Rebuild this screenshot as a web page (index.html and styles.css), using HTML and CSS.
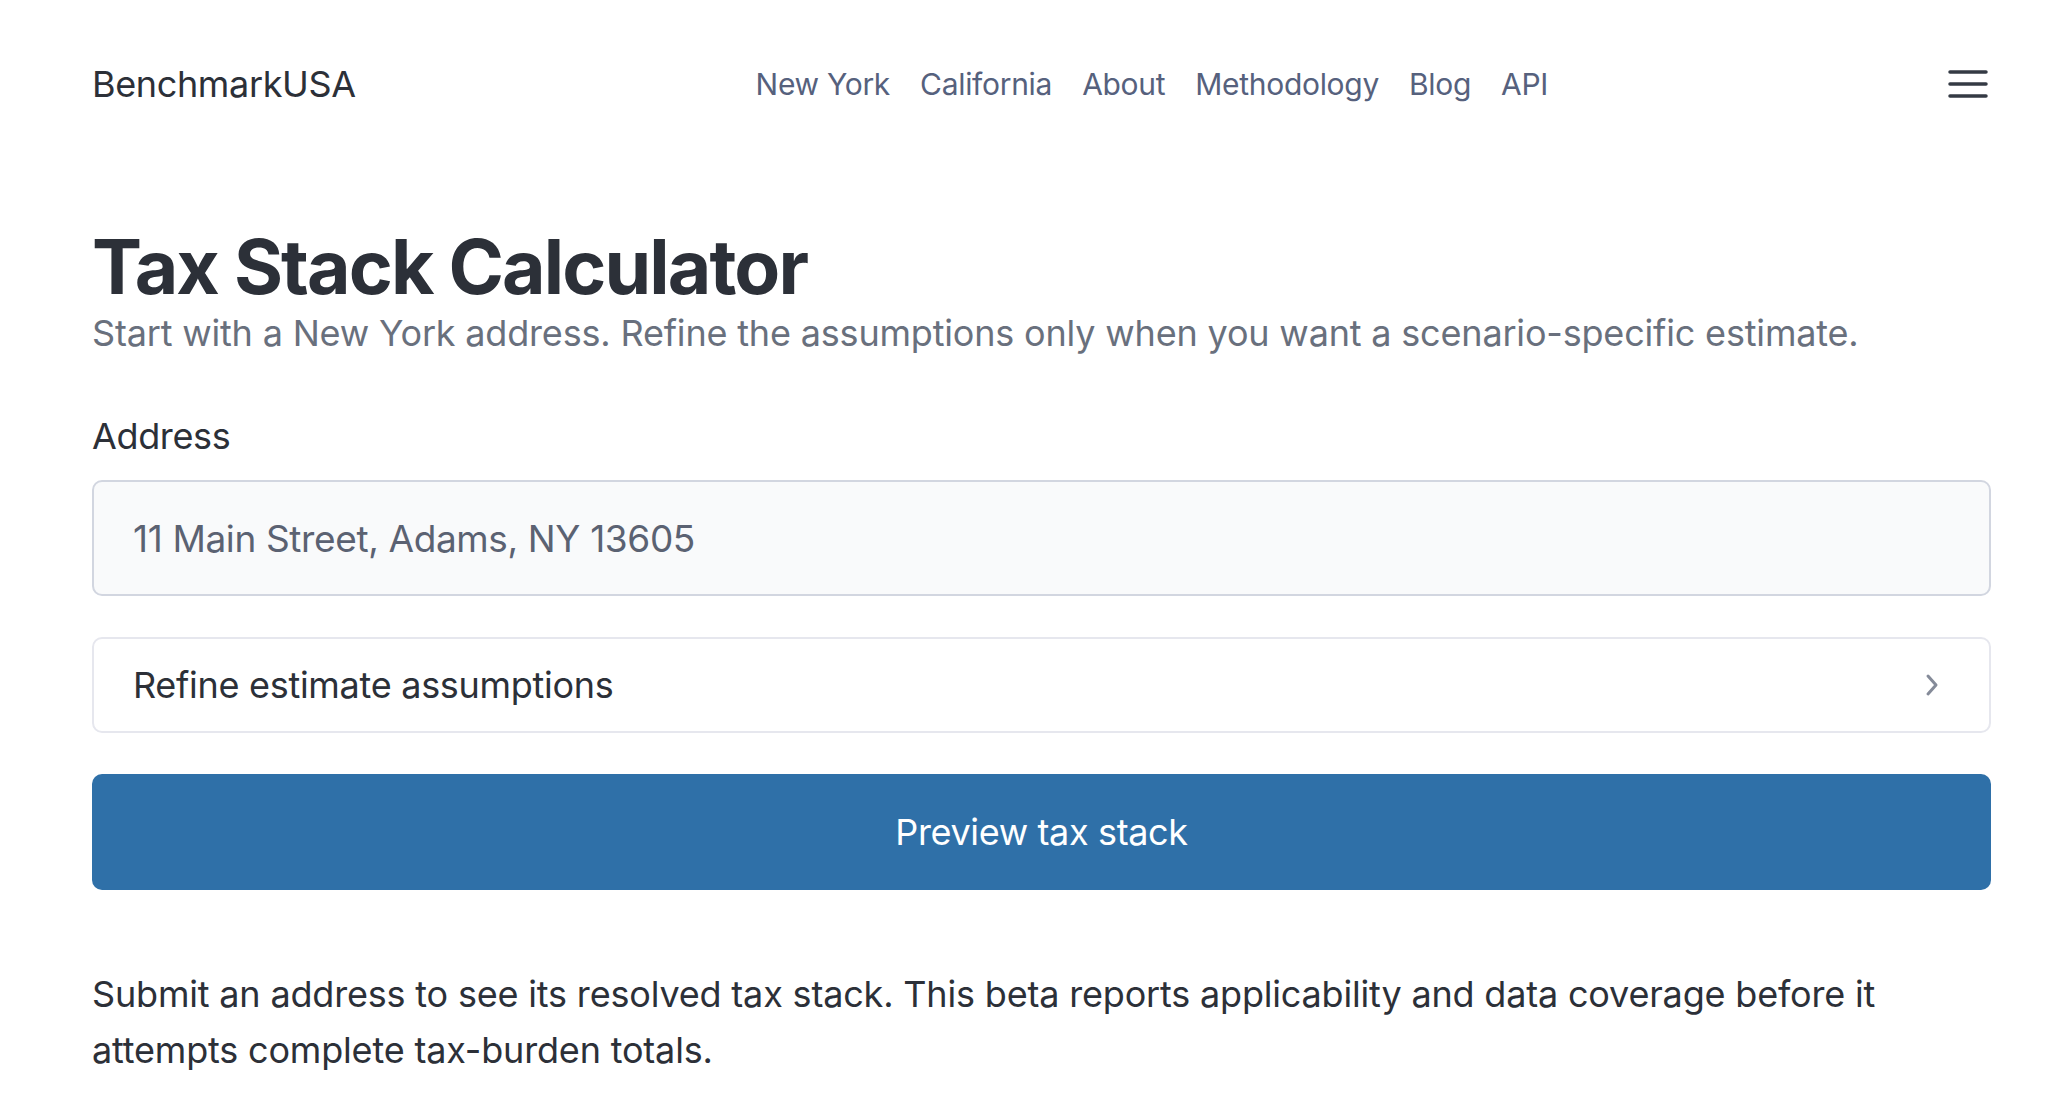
FILE: index.html
```html
<!DOCTYPE html>
<html lang="en">
<head>
<meta charset="utf-8">
<title>Tax Stack Calculator · BenchmarkUSA</title>
<link rel="stylesheet" href="styles.css">
</head>
<body>
<header class="site-header">
  <a class="brand" href="#">BenchmarkUSA</a>
  <nav class="main-nav">
    <a href="#">New York</a>
    <a href="#">California</a>
    <a href="#">About</a>
    <a href="#">Methodology</a>
    <a href="#">Blog</a>
    <a href="#">API</a>
  </nav>
  <button class="menu-toggle" type="button" aria-label="Open menu">
    <svg width="40" height="28" viewBox="0 0 40 28" aria-hidden="true">
      <g stroke="#343a44" stroke-width="3.5" stroke-linecap="round">
        <line x1="2" y1="2" x2="38" y2="2"/>
        <line x1="2" y1="14" x2="38" y2="14"/>
        <line x1="2" y1="26" x2="38" y2="26"/>
      </g>
    </svg>
  </button>
</header>

<main class="page">
  <section class="intro">
    <h1 class="title">Tax Stack Calculator</h1>
    <p class="lead">Start with a New York address. Refine the assumptions only when you want a scenario-specific estimate.</p>
  </section>

  <form class="calc-form">
    <label class="field-label" for="address">Address</label>
    <input class="field-input" id="address" type="text" value="11 Main Street, Adams, NY 13605">

    <details class="refine">
      <summary class="refine-summary">
        <span>Refine estimate assumptions</span>
        <svg class="chevron" width="14" height="24" viewBox="0 0 14 24" aria-hidden="true">
          <path d="M3 3 L11 12 L3 21" fill="none" stroke="#858b99" stroke-width="3" stroke-linecap="round" stroke-linejoin="round"/>
        </svg>
      </summary>
    </details>

    <button class="submit" type="button">Preview tax stack</button>
  </form>

  <p class="note">Submit an address to see its resolved tax stack. This beta reports applicability and data coverage before it attempts complete tax-burden totals.</p>
</main>
</body>
</html>
```

FILE: styles.css
```css
* {
  box-sizing: border-box;
}

html, body {
  margin: 0;
  padding: 0;
  background: #ffffff;
}

body {
  font-family: Inter, "Noto Sans", "Liberation Sans", sans-serif;
  color: #2c3038;
}

a {
  text-decoration: none;
}

/* Top bar */
.site-header {
  display: flex;
  align-items: flex-start;
  justify-content: space-between;
  padding: 60px 73px 0 92px;
  height: 168px;
}

.brand {
  font-size: 36px;
  line-height: 48px;
  color: #2c3038;
  letter-spacing: -0.01em;
}

.main-nav {
  display: flex;
  gap: 30px;
}

.main-nav a {
  font-size: 30px;
  line-height: 48px;
  color: #56617d;
  letter-spacing: -0.01em;
}

.menu-toggle {
  border: 0;
  background: none;
  padding: 0;
  margin: 10px 3px 0 0;
  width: 40px;
  height: 28px;
  display: flex;
  cursor: pointer;
}

/* Content */
.page {
  padding: 0 73px 0 92px;
}

.title {
  margin: 57px 0 0;
  font-size: 75px;
  line-height: 84px;
  font-weight: 700;
  letter-spacing: -0.025em;
  color: #2c3038;
}

.lead {
  margin: 0;
  font-size: 36px;
  line-height: 48px;
  color: #69707d;
  letter-spacing: -0.005em;
}

.calc-form {
  margin-top: 55px;
  display: flex;
  flex-direction: column;
}

.field-label {
  font-size: 36px;
  line-height: 48px;
  color: #2c3038;
  margin-bottom: 20px;
  letter-spacing: -0.01em;
}

.field-input {
  height: 116px;
  border: 2px solid #d2d6e0;
  border-radius: 10px;
  background: #f9fafb;
  padding: 0 39px;
  font-family: inherit;
  font-size: 37px;
  color: #5b6272;
  letter-spacing: -0.01em;
  outline: none;
}

.refine {
  margin-top: 41px;
  border: 2px solid #e6e7ee;
  border-radius: 10px;
  background: #ffffff;
}

.refine-summary {
  list-style: none;
  height: 92px;
  display: flex;
  align-items: center;
  justify-content: space-between;
  padding: 0 50px 0 39px;
  font-size: 36px;
  color: #2c3038;
  letter-spacing: -0.008em;
  cursor: pointer;
}

.refine-summary::-webkit-details-marker {
  display: none;
}

.submit {
  margin-top: 41px;
  height: 116px;
  border: 0;
  border-radius: 10px;
  background: #2f70a8;
  color: #ffffff;
  font-family: inherit;
  font-size: 36px;
  letter-spacing: -0.01em;
  cursor: pointer;
}

.note {
  margin: 76px 0 0;
  font-size: 36px;
  line-height: 56px;
  color: #2c3038;
  letter-spacing: -0.005em;
}
```
